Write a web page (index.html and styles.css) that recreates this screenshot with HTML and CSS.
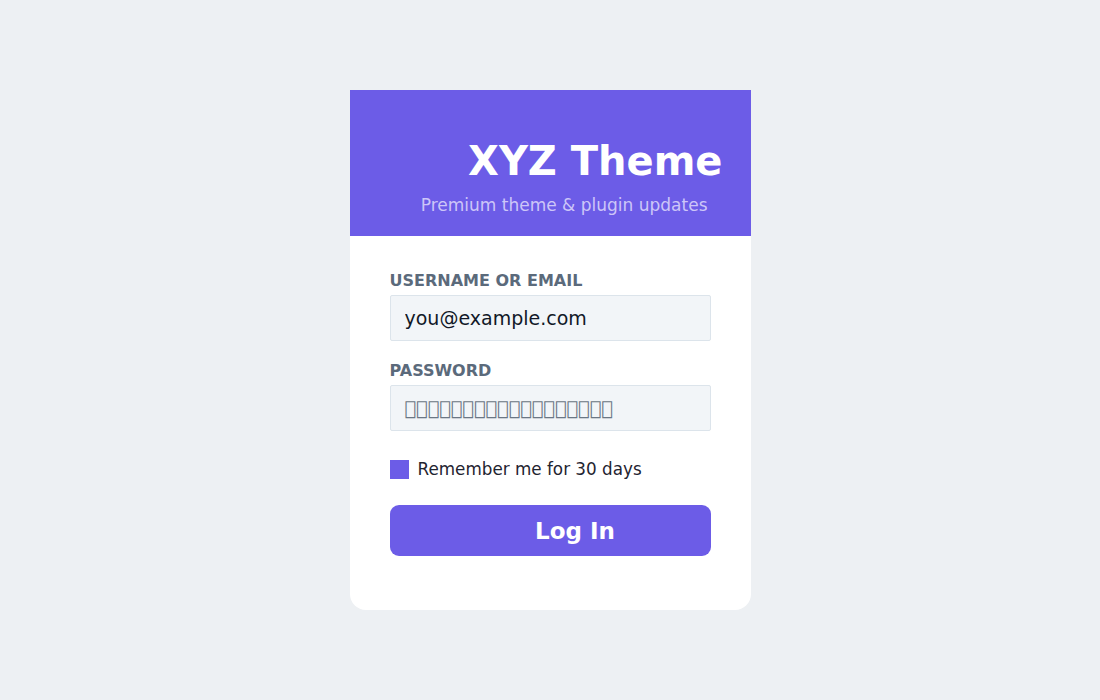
FILE: index.html
```html
<!DOCTYPE html>
<html lang="en">
<head>
    <meta charset="UTF-8">
    <meta name="viewport" content="width=device-width, initial-scale=1.0">
    <title>XYZ Theme - Log In</title>
    <link rel="stylesheet" href="styles.css">
</head>
<body>
    <div class="login-card">
        <div class="brand">
            <h1>XYZ Theme</h1>
            <p class="tagline">Premium theme &amp; plugin updates</p>
        </div>

        <form class="login-form" onsubmit="return false;">
            <label for="user">Username or Email</label>
            <input type="text" id="user" class="field" value="you@example.com">

            <label for="pass">Password</label>
            <div id="pass" class="field masked">&#xE000;&#xE000;&#xE000;&#xE000;&#xE000;&#xE000;&#xE000;&#xE000;&#xE000;&#xE000;&#xE000;&#xE000;&#xE000;&#xE000;&#xE000;&#xE000;&#xE000;&#xE000;</div>

            <div class="remember">
                <input type="checkbox" id="remember" checked>
                <label for="remember">Remember me for 30 days</label>
            </div>

            <button type="submit">Log In</button>
        </form>
    </div>
</body>
</html>
```

FILE: styles.css
```css
body {
    margin: 0;
    font-family: "DejaVu Sans", Verdana, sans-serif;
    background-color: #edf0f3;
    min-height: 100vh;
    display: flex;
    align-items: center;
    justify-content: center;
}
.login-card {
    width: 401px;
    background-color: #fff;
    border-radius: 0 0 16px 16px;
    overflow: hidden;
}
.brand {
    background-color: #6c5ce7;
    color: #fff;
    text-align: right;
    padding: 47px 0 20px;
}
.brand h1 {
    margin: 0 28px 0 0;
    font-size: 40px;
    line-height: 48px;
    font-weight: bold;
}
.tagline {
    margin: 10px 43px 0 0;
    font-size: 17px;
    line-height: 21px;
    color: #cdc6f8;
}
.login-form {
    padding: 35px 40px 54px;
    display: flex;
    flex-direction: column;
}
.login-form > label {
    font-size: 16px;
    line-height: 19px;
    font-weight: bold;
    text-transform: uppercase;
    color: #5b6a7b;
    margin-bottom: 5px;
}
.field {
    box-sizing: border-box;
    height: 46px;
    padding: 0 14px;
    border: 1px solid #dce4eb;
    border-radius: 2px;
    background-color: #f2f5f8;
    font-family: inherit;
    font-size: 19px;
    color: #111827;
    margin-bottom: 20px;
}
.masked {
    display: flex;
    align-items: center;
    color: #6b7785;
    font-size: 19.3px;
    margin-bottom: 29px;
}
.remember {
    display: flex;
    align-items: center;
    gap: 9px;
    margin-bottom: 26px;
}
.remember input {
    appearance: none;
    width: 19px;
    height: 19px;
    margin: 0;
    background-color: #6c5ce7;
}
.remember label {
    font-size: 16.8px;
    line-height: 19px;
    color: #1f2430;
}
button {
    height: 51px;
    border: none;
    border-radius: 9px;
    background-color: #6c5ce7;
    color: #fff;
    font-family: inherit;
    font-size: 23px;
    font-weight: bold;
    padding: 0 0 0 50px;
    cursor: pointer;
}
button:hover {
    background-color: #5a4bd6;
}
```
